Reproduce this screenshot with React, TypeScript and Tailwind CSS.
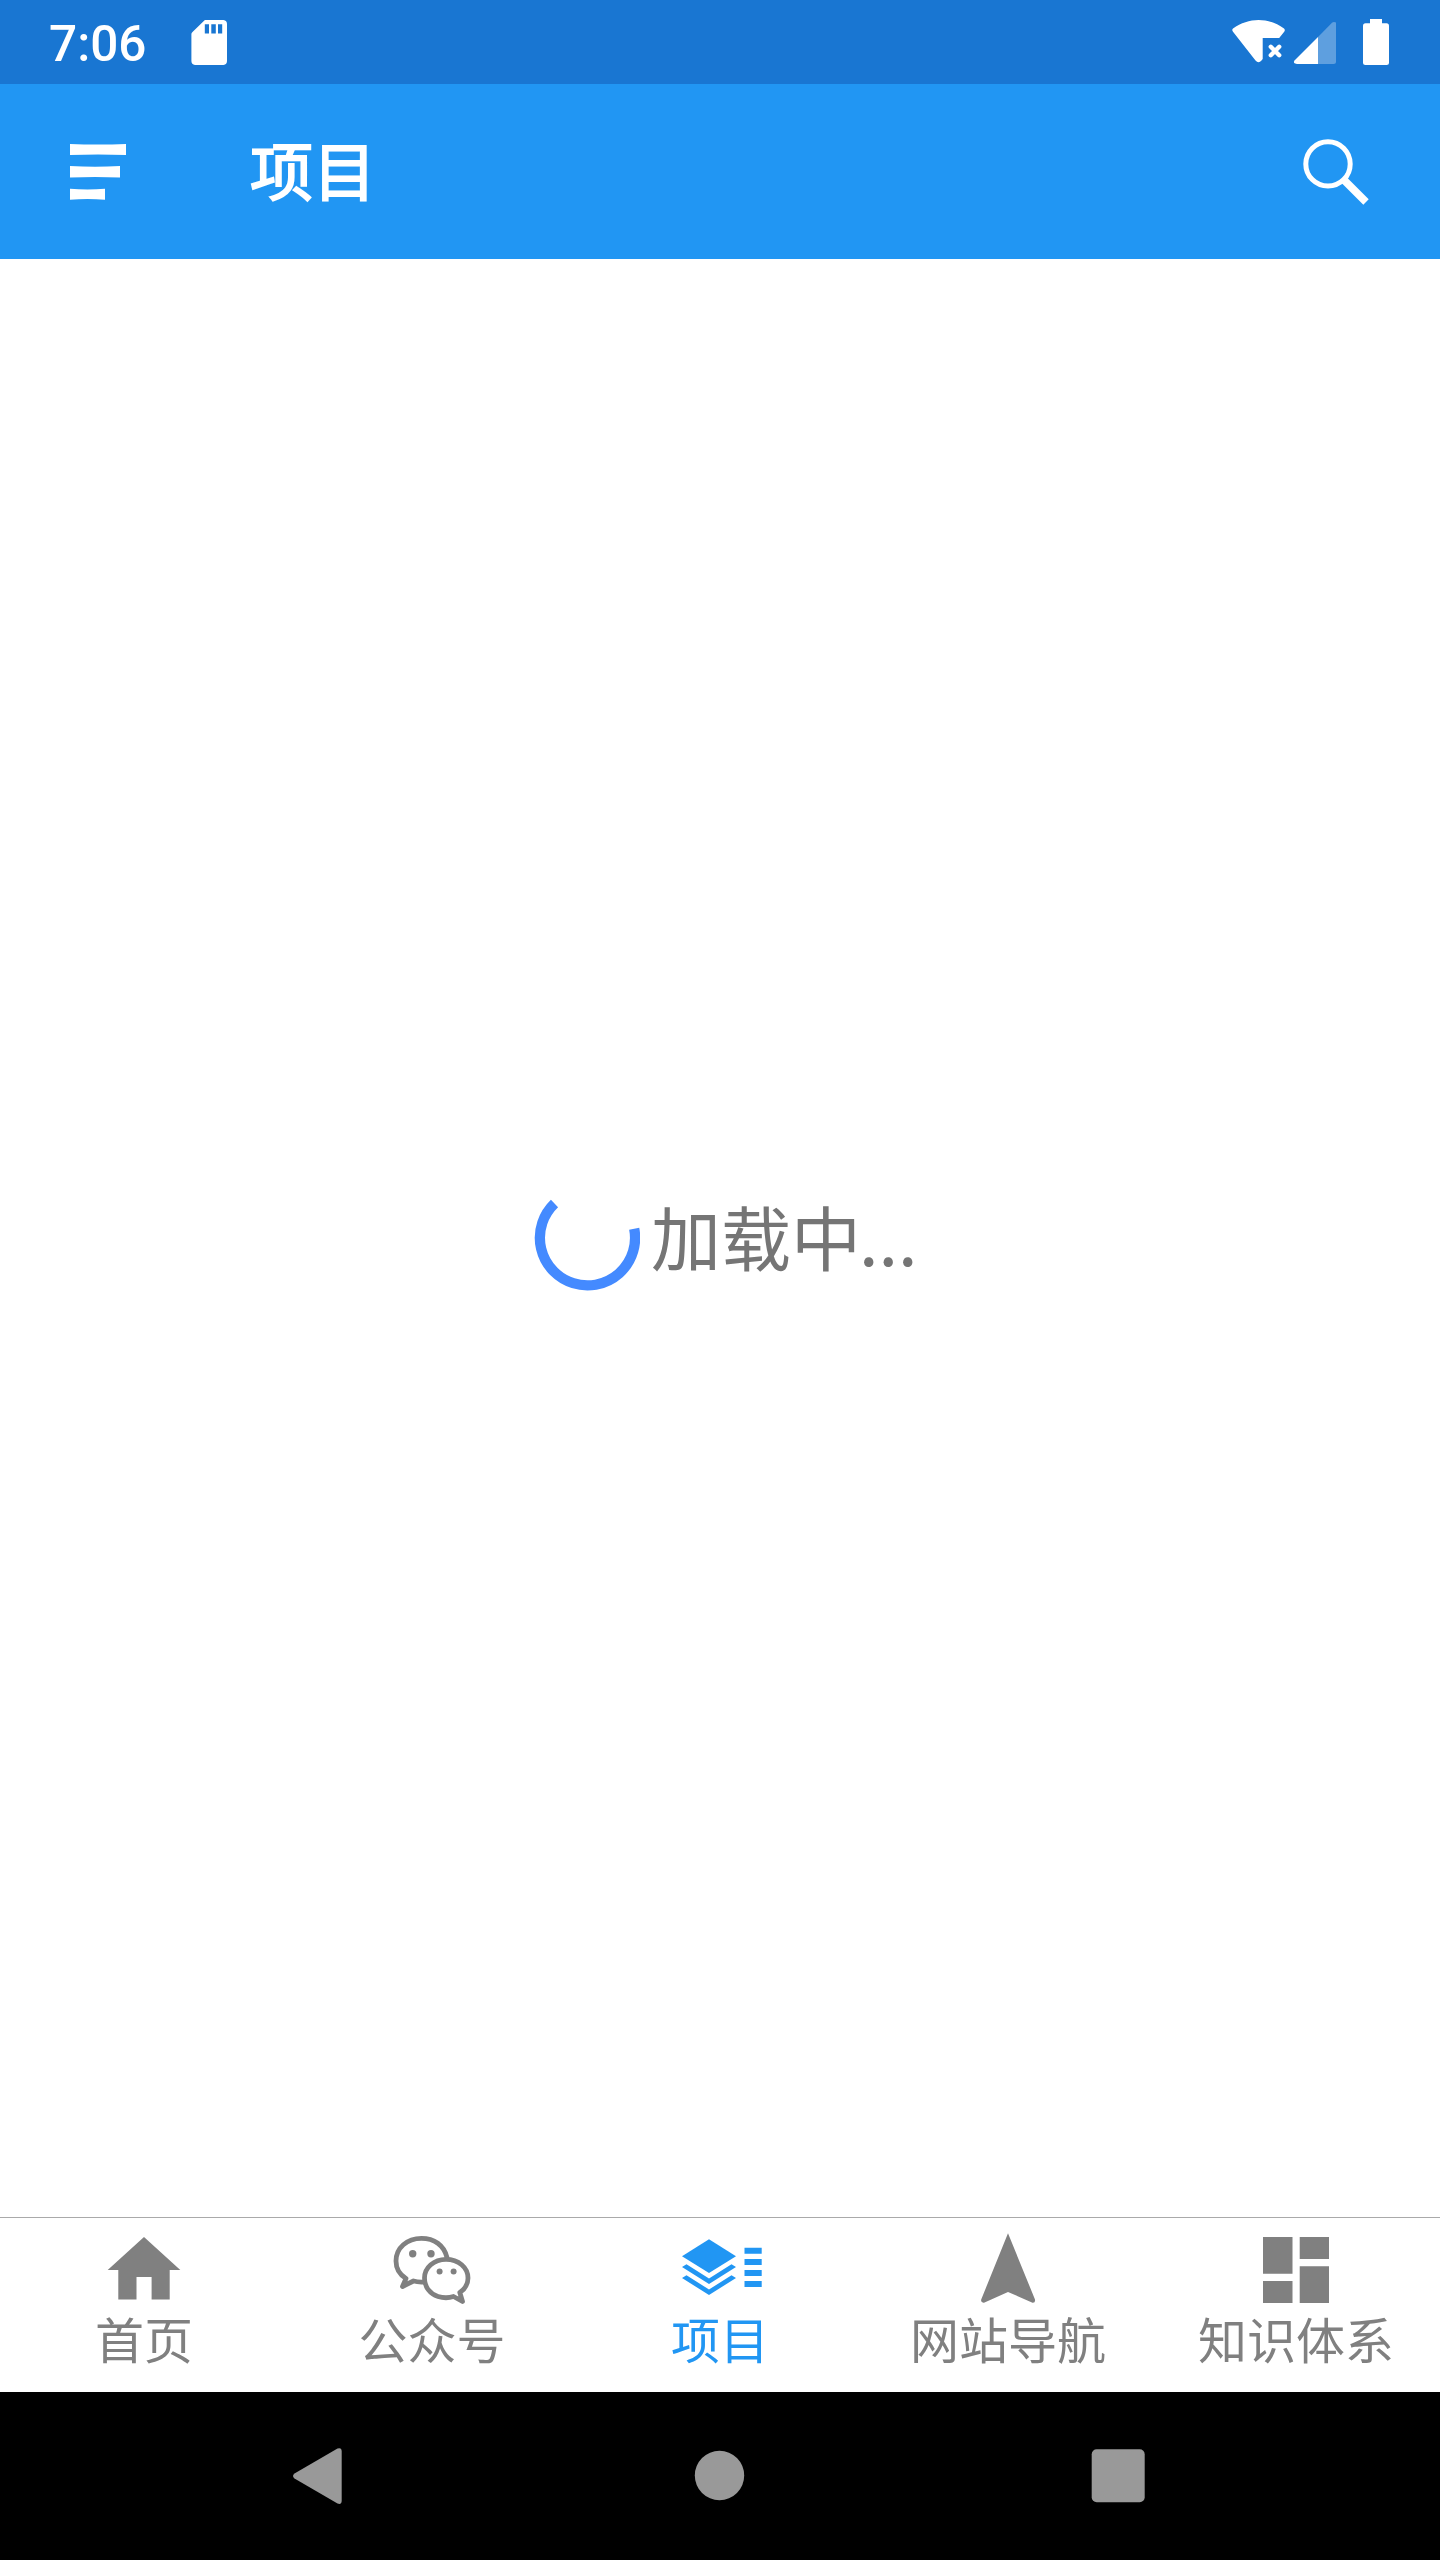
import React from "react";

const GRAY = "#808080";
const BLUE = "#2196f3";

function SdCardIcon() {
  return (
    <svg className="absolute top-5 left-[191px] h-[45px] w-9" viewBox="0 0 36 45" fill="#fff">
      <path
        fillRule="evenodd"
        d="M14.5 0H32.5Q36 .4 36 4V41Q36 44.6 32.5 45H4Q.4 44.6 .4 41V14Q.4 13 1.5 12L12.8 1Q13.5 0 14.5 0ZM13.8 4.2V13.6H18V4.2ZM20.3 4.2V13.6H24.8V4.2ZM27 4.2V13.6H31.2V4.2Z"
      />
    </svg>
  );
}

function StatusIcons() {
  return (
    <svg className="h-[84px] w-[240px]" viewBox="0 0 240 84" fill="#fff">
      <path d="M33 28.500Q31.500 30 33 31.800L55.500 60.500Q58.500 64 61.500 60.500L62.700 59V38H79.200L84.200 31.800Q85.500 30 84 28.500C68 17 49 17 33 28.500Z" />
      <path d="M70.800 46.800L79.200 55.200M79.200 46.800L70.800 55.200" stroke="#fff" strokeWidth="4.400" strokeLinecap="round" />
      <path d="M118 37V64H97Q92.500 63.500 94.500 60.500Z" />
      <path d="M118 37L132 22.800Q133.500 21.500 136 22.500V61.500Q136 64 133.500 64H118Z" opacity=".3" />
      <path d="M170 19H182V23.300H186.500Q189 23.300 189 26V62.500Q189 65 186.500 65H165.500Q163 65 163 62.500V26Q163 23.300 165.500 23.300H170Z" />
    </svg>
  );
}

function MenuIcon() {
  return (
    <svg className="ml-[70px] h-14 w-14" viewBox="0 0 56 56" fill="#fff">
      <path d="M0 0Q28 1.200 56 0V11Q28 10 0 11Z" />
      <path d="M0 22Q25 23.400 50 22V33.600Q25 32.200 0 33.600Z" />
      <path d="M0 44.800Q17.500 46.200 35 44.800V55.800Q17.500 54.400 0 55.800Z" />
    </svg>
  );
}

function SearchIcon() {
  return (
    <svg className="mr-[70px] ml-auto h-[68px] w-[67px]" viewBox="0 -1 67 68" fill="none" stroke="#fff">
      <circle cx="25" cy="24.900" r="22.200" strokeWidth="5" />
      <path d="M41 41L63 63" strokeWidth="7.600" />
    </svg>
  );
}

function HomeIcon() {
  return (
    <svg className="h-[100px] w-[84px]" viewBox="102 2218 84 100" fill={GRAY}>
      <path d="M144 2237L180.300 2270H169.700V2299.500H151.600V2277H136.500V2299.500H118.300V2270H107.700Z" />
    </svg>
  );
}

function WechatIcon() {
  return (
    <svg className="h-[100px] w-[84px]" viewBox="390 2218 84 100" fill="none" stroke={GRAY} strokeWidth="4.800" strokeLinejoin="round" strokeLinecap="round">
      <path d="M447 2257.500C444 2245 434 2238.300 421.500 2238.300C407 2238.300 396 2248 396 2261C396 2268.500 399.500 2274.500 406 2278.500L402.500 2286.500L413.500 2281Q418 2282.300 423.500 2282" />
      <path d="M446 2259.300C458.500 2259.300 468 2267.500 468 2278C468 2284 465 2289 459.800 2292.500L462.500 2301.500L453.500 2296.500C449 2298 443 2298 438 2296.500C430 2294 424.500 2287 424.500 2278C424.500 2267.500 434 2259.300 446 2259.300Z" />
      <g fill={GRAY} stroke="none">
        <circle cx="412.700" cy="2253.800" r="3.700" />
        <circle cx="431" cy="2253.800" r="3.700" />
        <circle cx="439.600" cy="2271.500" r="3" />
        <circle cx="453.600" cy="2271.500" r="3" />
      </g>
    </svg>
  );
}

function LayersIcon() {
  return (
    <svg className="h-[100px] w-[90px]" viewBox="675 2218 90 100" fill={BLUE}>
      <path d="M709 2239.300L736 2256.200L709 2273L682 2256.200Z" />
      <path d="M682 2267L686.500 2264.200L709 2278.500L731.500 2264.200L736 2267L709 2284Z" />
      <path d="M682 2278L686.500 2275.200L709 2289.500L731.500 2275.200L736 2278L709 2295Z" />
      <path d="M744.500 2247.700H761.700V2253.700H744.500ZM744.500 2259H761.700V2265H744.500ZM744.500 2270H761.700V2276H744.500ZM744.500 2281H761.700V2287H744.500Z" />
    </svg>
  );
}

function NavigationIcon() {
  return (
    <svg className="h-[100px] w-[70px]" viewBox="973 2218 70 100" fill={GRAY}>
      <path d="M1008 2233.300L1035 2299.500Q1035.500 2303 1032.500 2302.700L1008 2292L984 2302.700Q980.500 2303 981.200 2299.500Z" />
    </svg>
  );
}

function DashboardIcon() {
  return (
    <svg className="h-[100px] w-[70px]" viewBox="1261 2218 70 100" fill={GRAY}>
      <path d="M1263 2237H1292.500V2273.700H1263ZM1299.700 2237H1329V2259H1299.700ZM1263 2281H1292.500V2303H1263ZM1299.700 2266.300H1329V2303H1299.700Z" />
    </svg>
  );
}

const tabs = [
  { label: "首页", icon: <HomeIcon />, active: false },
  { label: "公众号", icon: <WechatIcon />, active: false },
  { label: "项目", icon: <LayersIcon />, active: true },
  { label: "网站导航", icon: <NavigationIcon />, active: false },
  { label: "知识体系", icon: <DashboardIcon />, active: false },
];

export default function App() {
  return (
    <div className="flex h-[2560px] w-[1440px] flex-col overflow-hidden bg-white font-[Roboto,'Noto_Sans_CJK_SC',sans-serif]">
      <div className="relative flex h-[84px] shrink-0 items-center bg-[#1976d2] text-white">
        <span className="ml-[49px] pt-[5px] text-[49.5px] leading-[79px] font-medium">7:06</span>
        <SdCardIcon />
        <div className="ml-auto">
          <StatusIcons />
        </div>
      </div>

      <header className="flex h-[175px] shrink-0 items-center bg-[#2196f3] pt-px text-white">
        <MenuIcon />
        <h1 className="ml-[124px] pt-[3px] text-[63px] leading-[74px] font-normal [-webkit-text-stroke:1.8px_white]">项目</h1>
        <SearchIcon />
      </header>

      <main className="flex min-h-0 flex-1 items-center pl-[534px]">
        <svg className="h-[106px] w-[106px] shrink-0" viewBox="0 0 106 106" fill="none">
          <path d="M20.500 18.500A47.600 47.600 0 1 0 100.200 43.700" stroke="#448aff" strokeWidth="10.300" />
        </svg>
        <p className="ml-[11px] pt-px text-[70px] leading-[82px] text-[#757575]">
          加载中<span className="-ml-0.5 font-['Noto_Sans_CJK_SC',sans-serif]">...</span>
        </p>
      </main>

      <nav className="grid h-[175px] shrink-0 grid-cols-5 border-t border-[#aaa]">
        {tabs.map((tab) => (
          <div
            key={tab.label}
            className={tab.active ? "flex flex-col items-center text-[#2196f3]" : "flex flex-col items-center text-[#808080]"}
          >
            {tab.icon}
            <span className="text-[49px] leading-[50px]">{tab.label}</span>
          </div>
        ))}
      </nav>

      <div className="flex h-[168px] shrink-0 items-center bg-black pl-[287px]">
        <svg className="h-[60px] w-[60px]" viewBox="287 2446 60 60" fill="#999">
          <path d="M294.500 2473.500L337.500 2448.500Q341.700 2447 341.700 2451.500V2500.500Q341.700 2505 337.500 2503.500L294.500 2478.500Q291.500 2476 294.500 2473.500Z" />
        </svg>
        <svg className="ml-[343px] h-[60px] w-[60px]" viewBox="690 2446 60 60" fill="#999">
          <circle cx="719.500" cy="2475.500" r="24.700" />
        </svg>
        <svg className="ml-[338px] h-[60px] w-[60px]" viewBox="1088 2446 60 60" fill="#999">
          <rect x="1091.700" y="2449.300" width="53" height="53" rx="5" />
        </svg>
      </div>
    </div>
  );
}
